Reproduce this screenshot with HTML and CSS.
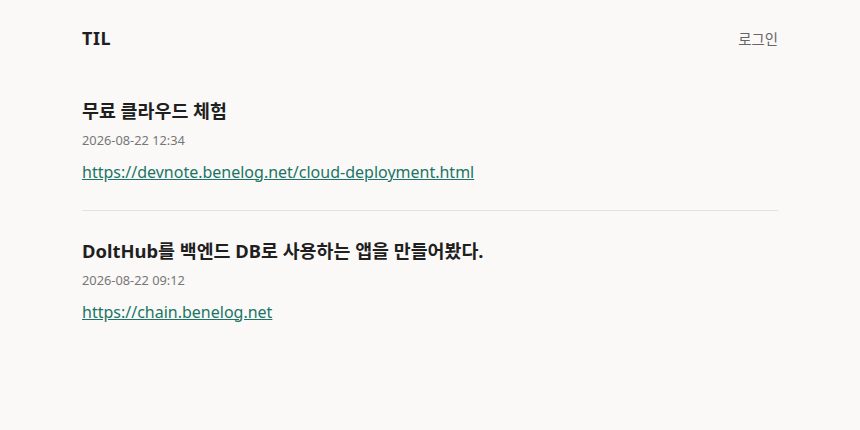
FILE: index.html
```html
<!DOCTYPE html>
<html lang="ko">
<head>
<meta charset="utf-8">
<title>TIL</title>
<link rel="stylesheet" href="styles.css">
</head>
<body>
<div class="page">
  <header class="header">
    <a class="brand" href="#">TIL</a>
    <a class="login" href="#">로그인</a>
  </header>
  <main class="list">
    <article class="post">
      <h2 class="title">무료 클라우드 체험</h2>
      <div class="date">2026-08-22 12:34</div>
      <a class="link" href="#">https://devnote.benelog.net/cloud-deployment.html</a>
    </article>
    <article class="post">
      <h2 class="title">DoltHub를 백엔드 DB로 사용하는 앱을 만들어봤다.</h2>
      <div class="date">2026-08-22 09:12</div>
      <a class="link" href="#">https://chain.benelog.net</a>
    </article>
  </main>
</div>
</body>
</html>
```

FILE: styles.css
```css
html, body {
  margin: 0;
  padding: 0;
  background: #faf9f7;
}
body {
  font-family: "Noto Sans", "Noto Sans CJK KR", sans-serif;
  color: #1f1f1f;
}
.page {
  max-width: 696px;
  margin: 0 auto;
}
.header {
  display: flex;
  justify-content: space-between;
  align-items: center;
  height: 30px;
  padding: 23px 0 18px;
}
.brand {
  font-weight: 700;
  font-size: 18px;
  color: #1f1f1f;
  text-decoration: none;
  letter-spacing: 0.5px;
}
.login {
  font-size: 14.4px;
  color: #666;
  text-decoration: none;
}
.list {
  display: flex;
  flex-direction: column;
}
.post {
  padding: 27px 0;
  border-bottom: 1px solid #e4e2de;
  display: flex;
  flex-direction: column;
  align-items: flex-start;
}
.post:last-child {
  border-bottom: none;
}
.title {
  margin: 0;
  font-size: 18.4px;
  font-weight: 700;
  line-height: 1.4;
}
.date {
  font-size: 12.8px;
  color: #777;
  margin-top: 7px;
}
.link {
  font-size: 16px;
  color: #1a7566;
  margin-top: 12px;
}
```
